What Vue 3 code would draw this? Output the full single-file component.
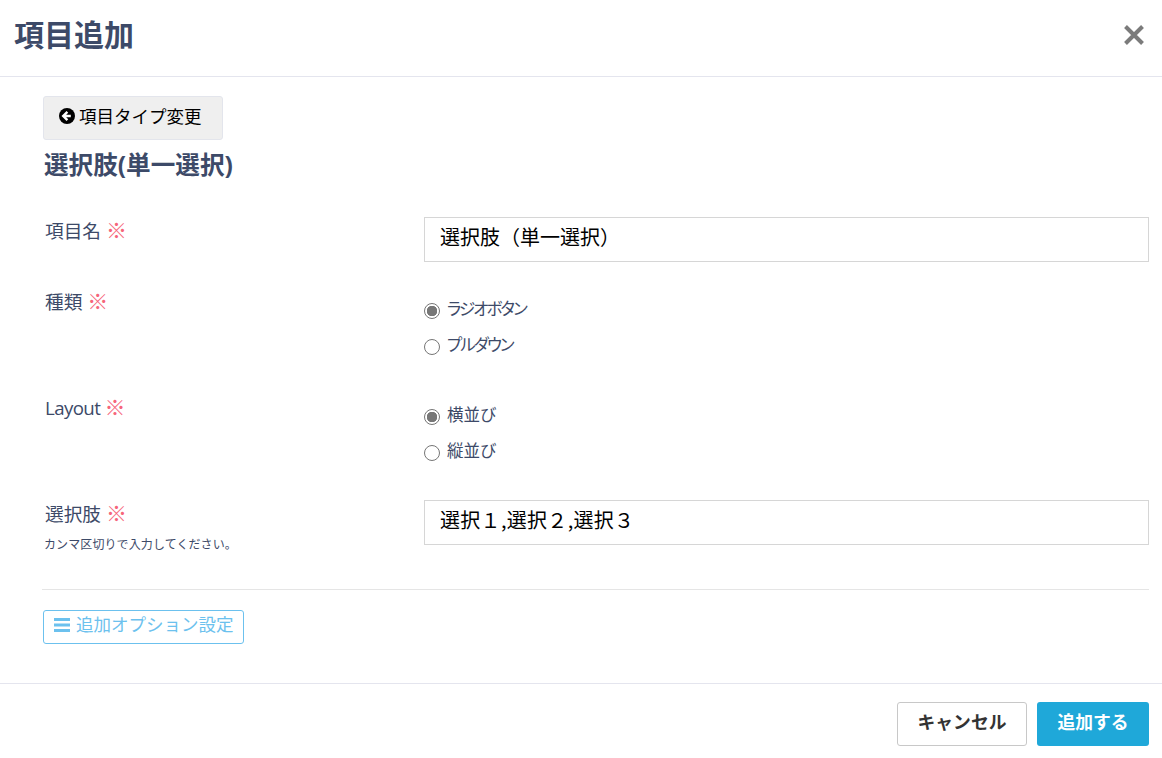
<template>
  <div class="modal">
    <header class="modal-header">
      <h1>項目追加</h1>
      <button class="close" aria-label="閉じる">
        <svg width="24" height="24" viewBox="0 0 24 24"><path d="M3.5 3.5 20.5 20.5M20.5 3.5 3.5 20.5" stroke="#7b7b7b" stroke-width="4" fill="none" /></svg>
      </button>
    </header>

    <div class="modal-body">
      <button class="back-btn">
        <svg width="16" height="16" viewBox="0 0 16 16">
          <circle cx="8" cy="8" r="8" fill="#000" />
          <path d="M8.4 3.8 4.2 8l4.2 4.2M4.8 8h7" stroke="#fff" stroke-width="2.4" fill="none" />
        </svg>
        項目タイプ変更
      </button>
      <h2>選択肢(単一選択)</h2>

      <div class="form-row row-name">
        <label class="field-label">項目名 <span class="req">※</span></label>
        <input class="text-input" type="text" value="選択肢（単一選択）" />
      </div>

      <div v-for="group in radioGroups" :key="group.label" class="form-row" :class="group.cls">
        <label class="field-label">{{ group.label }} <span class="req">※</span></label>
        <div class="radios">
          <label v-for="(opt, i) in group.options" :key="opt" class="radio">
            <input type="radio" :name="group.label" :checked="i === 0" />
            <span>{{ opt }}</span>
          </label>
        </div>
      </div>

      <div class="form-row row-choices">
        <div>
          <label class="field-label">選択肢 <span class="req">※</span></label>
          <p class="help">カンマ区切りで入力してください。</p>
        </div>
        <input class="text-input" type="text" value="選択１,選択２,選択３" />
      </div>

      <hr />

      <button class="option-btn">
        <svg width="16" height="14" viewBox="0 0 16 14"><path d="M0 0h16v3H0zM0 5.5h16v3H0zM0 11h16v3H0z" fill="#6cc1ee" /></svg>
        追加オプション設定
      </button>
    </div>

    <footer class="modal-footer">
      <button class="cancel">キャンセル</button>
      <button class="submit">追加する</button>
    </footer>
  </div>
</template>

<script setup>
const radioGroups = [
  { label: '種類', cls: 'row-type', options: ['ラジオボタン', 'プルダウン'] },
  { label: 'Layout', cls: 'row-layout', options: ['横並び', '縦並び'] }
]
</script>

<style>
html, body {
  background: #fff;
}
</style>

<style scoped>
.modal {
  width: 1162px;
  height: 758px;
  font-family: "Open Sans", "Noto Sans CJK JP", sans-serif;
  color: #3d4a68;
  display: flex;
  flex-direction: column;
}
button {
  font-family: inherit;
  cursor: pointer;
}
.modal-header {
  height: 77px;
  box-sizing: border-box;
  border-bottom: 1px solid #e4e5ee;
  display: flex;
  align-items: center;
  justify-content: space-between;
  padding: 0 16px 6px 14px;
}
h1 {
  margin: 0;
  font-size: 30px;
  font-weight: 700;
  line-height: 1.2;
}
.close {
  border: 0;
  background: none;
  padding: 0;
  display: flex;
}
.modal-body {
  flex: 1;
  padding: 19px 13px 0 43px;
}
.back-btn {
  width: 180px;
  height: 44px;
  background: #efefef;
  border: 1px solid #e3e5ec;
  border-radius: 3px;
  color: #000;
  font-size: 17.5px;
  display: flex;
  align-items: center;
  gap: 4px;
  padding: 0 0 6px 15px;
  white-space: nowrap;
}
.back-btn svg {
  margin-top: 2px;
}
h2 {
  margin: 7px 0 0 1px;
  font-size: 24.6px;
  font-weight: 700;
  line-height: 36px;
}
.form-row {
  display: grid;
  grid-template-columns: 381px 725px;
  font-size: 18.7px;
}
.field-label {
  display: block;
  padding: 1px 0 0 2px;
  line-height: 24px;
}
.row-name {
  margin-top: 34px;
}
.row-type {
  margin-top: 26px;
}
.row-layout {
  margin-top: 36px;
}
.row-layout .field-label {
  letter-spacing: -0.6px;
}
.row-choices {
  margin-top: 36px;
}
.row-choices .text-input {
  letter-spacing: 0.3px;
}
.req {
  color: #f6657a;
  font-size: 21px;
}
.text-input {
  height: 45px;
  box-sizing: border-box;
  border: 1px solid #d6d6d6;
  padding: 0 15px 7px;
  font-family: "Noto Sans CJK JP", sans-serif;
  font-size: 20px;
  color: #000;
  outline: none;
}
.radios {
  display: flex;
  flex-direction: column;
  gap: 10px;
  padding-top: 8px;
}
.radio {
  display: flex;
  align-items: center;
  gap: 7px;
  height: 26px;
  font-size: 16.5px;
  font-feature-settings: "palt";
}
.radio span {
  margin-top: -2px;
}
.row-type .radio {
  letter-spacing: -1.9px;
}
.radio input {
  appearance: none;
  width: 16px;
  height: 16px;
  margin: 3px 0 0;
  border: 1px solid #767676;
  border-radius: 50%;
  background: #fff;
}
.radio input:checked {
  background: radial-gradient(circle, #777 0 5px, #fff 5.5px);
}
.help {
  margin: 10px 0 0 1px;
  font-size: 12px;
  line-height: 18px;
  letter-spacing: 0.1px;
}
hr {
  margin: 35px 0 0 -1px;
  border: 0;
  border-top: 1px solid #e5e5e5;
}
.option-btn {
  margin-top: 20px;
  width: 201px;
  height: 34px;
  background: #fff;
  border: 1px solid #6cc1ee;
  border-radius: 3px;
  color: #6cc1ee;
  font-size: 17.5px;
  display: flex;
  align-items: center;
  gap: 6px;
  padding: 0 0 8px 10px;
  white-space: nowrap;
}
.option-btn svg {
  margin-top: 4px;
}
.modal-footer {
  height: 75px;
  box-sizing: border-box;
  border-top: 1px solid #e4e5ee;
  display: flex;
  justify-content: flex-end;
  gap: 10px;
  padding: 18px 13px 0 0;
}
.modal-footer button {
  height: 44px;
  border-radius: 3px;
  font-size: 17.8px;
  font-weight: 700;
  padding-bottom: 8px;
}
.cancel {
  width: 130px;
  background: #fff;
  border: 1px solid #c8c8c8;
  color: #333;
}
.submit {
  width: 112px;
  background: #1fa8d9;
  border: 0;
  color: #fff;
}
</style>
